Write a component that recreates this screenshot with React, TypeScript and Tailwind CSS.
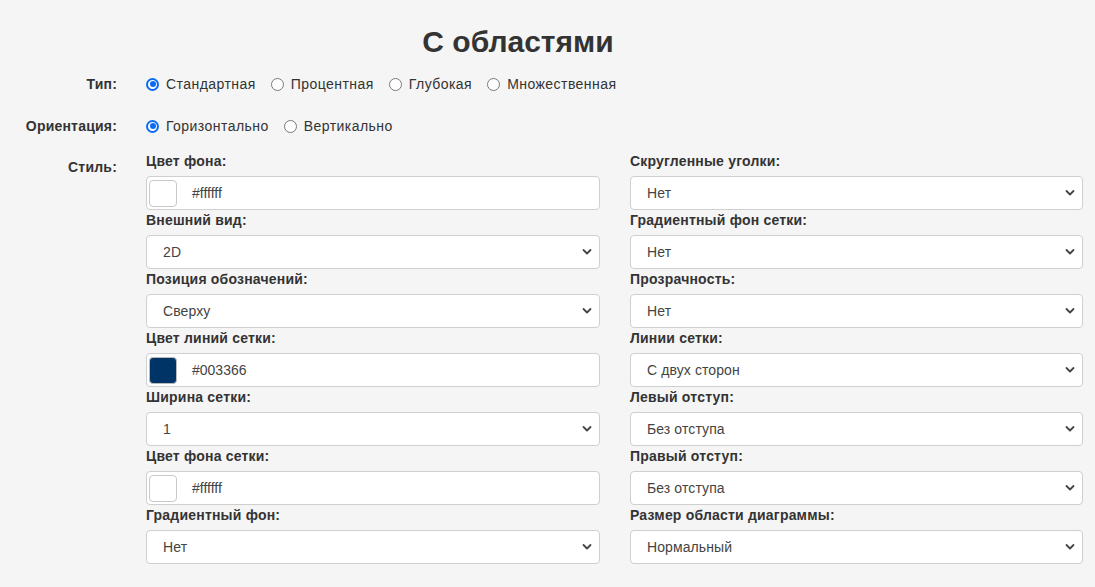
import React from "react";

const font = { fontFamily: '"Liberation Sans", Arial, sans-serif' };

function Radio({ checked, label }: { checked?: boolean; label: string }) {
  return (
    <div className="flex items-center mr-[15px]">
      {checked ? (
        <span className="w-[13px] h-[13px] rounded-full border-[2px] border-[#0a6cf5] bg-white flex items-center justify-center">
          <span className="w-[6px] h-[6px] rounded-full bg-[#0a6cf5]" />
        </span>
      ) : (
        <span className="w-[13px] h-[13px] rounded-full border border-[#7a7a7a] bg-white" />
      )}
      <span className="ml-[7px] text-[14px] tracking-[0.45px] text-[#333]">{label}</span>
    </div>
  );
}

function Chevron() {
  return (
    <svg width="10" height="7" viewBox="0 0 10 7" className="absolute right-[7px] top-1/2 -translate-y-1/2">
      <path d="M1.5 1.5 L5 5 L8.5 1.5" fill="none" stroke="#444" strokeWidth="1.8" strokeLinecap="round" strokeLinejoin="round" />
    </svg>
  );
}

function FieldLabel({ children }: { children: React.ReactNode }) {
  return <div className="text-[14px] leading-[20px] font-bold tracking-[0.2px] text-[#333] mb-[5px]">{children}</div>;
}

function SelectField({ label, value }: { label: string; value: string }) {
  return (
    <div>
      <FieldLabel>{label}</FieldLabel>
      <div className="relative h-[34px] bg-white border border-[#cfcfcf] rounded-[4px] flex items-center pl-[16px] text-[14px] tracking-[0.1px] text-[#444]">
        {value}
        <Chevron />
      </div>
    </div>
  );
}

function ColorField({ label, color, value }: { label: string; color: string; value: string }) {
  return (
    <div>
      <FieldLabel>{label}</FieldLabel>
      <div className="h-[34px] bg-white border border-[#cfcfcf] rounded-[4px] flex items-center pl-[2px] text-[14px] text-[#444]">
        <span
          className={
            color === "#003366"
              ? "w-[28px] h-[27px] rounded-[4px] border border-[#bbb] bg-[#003366]"
              : "w-[28px] h-[27px] rounded-[4px] border border-[#c8c8c8] bg-white"
          }
        />
        <span className="ml-[15px]">{value}</span>
      </div>
    </div>
  );
}

export default function App() {
  return (
    <div className="min-h-screen w-full bg-[#f5f5f5] text-[#333]" style={font}>
      <div className="w-[1036px] text-center pt-[24px]">
        <h1 className="text-[30px] leading-[36px] font-bold text-[#333]">С областями</h1>
      </div>
      <div className="flex items-center mt-[14px] h-[20px]">
        <div className="w-[117px] text-right text-[14px] font-bold tracking-[0.2px]">Тип:</div>
        <div className="ml-[29px] flex items-center">
          <Radio checked label="Стандартная" />
          <Radio label="Процентная" />
          <Radio label="Глубокая" />
          <Radio label="Множественная" />
        </div>
      </div>
      <div className="flex items-center mt-[22px] h-[20px]">
        <div className="w-[117px] text-right text-[14px] font-bold tracking-[0.2px]">Ориентация:</div>
        <div className="ml-[29px] flex items-center">
          <Radio checked label="Горизонтально" />
          <Radio label="Вертикально" />
        </div>
      </div>
      <div className="flex items-start mt-[15px]">
        <div className="w-[117px] text-right text-[14px] leading-[20px] font-bold tracking-[0.2px] pt-[6px]">Стиль:</div>
        <div className="ml-[29px] grid grid-cols-[454px_453px] gap-x-[30px]">
          <div className="flex flex-col">
            <ColorField label="Цвет фона:" color="#ffffff" value="#ffffff" />
            <SelectField label="Внешний вид:" value="2D" />
            <SelectField label="Позиция обозначений:" value="Сверху" />
            <ColorField label="Цвет линий сетки:" color="#003366" value="#003366" />
            <SelectField label="Ширина сетки:" value="1" />
            <ColorField label="Цвет фона сетки:" color="#ffffff" value="#ffffff" />
            <SelectField label="Градиентный фон:" value="Нет" />
          </div>
          <div className="flex flex-col">
            <SelectField label="Скругленные уголки:" value="Нет" />
            <SelectField label="Градиентный фон сетки:" value="Нет" />
            <SelectField label="Прозрачность:" value="Нет" />
            <SelectField label="Линии сетки:" value="С двух сторон" />
            <SelectField label="Левый отступ:" value="Без отступа" />
            <SelectField label="Правый отступ:" value="Без отступа" />
            <SelectField label="Размер области диаграммы:" value="Нормальный" />
          </div>
        </div>
      </div>
    </div>
  );
}
